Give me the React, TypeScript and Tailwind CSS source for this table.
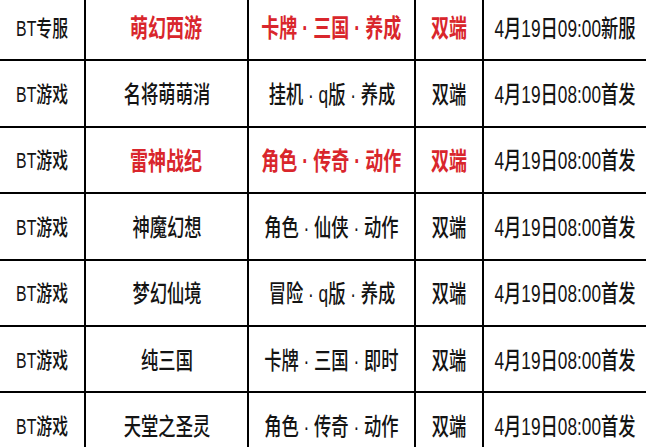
const games = [
  { tag: "BT专服", name: "萌幻西游", genre: "卡牌 · 三国 · 养成", platform: "双端", time: "4月19日09:00新服", hot: true },
  { tag: "BT游戏", name: "名将萌萌消", genre: "挂机 · q版 · 养成", platform: "双端", time: "4月19日08:00首发" },
  { tag: "BT游戏", name: "雷神战纪", genre: "角色 · 传奇 · 动作", platform: "双端", time: "4月19日08:00首发", hot: true },
  { tag: "BT游戏", name: "神魔幻想", genre: "角色 · 仙侠 · 动作", platform: "双端", time: "4月19日08:00首发" },
  { tag: "BT游戏", name: "梦幻仙境", genre: "冒险 · q版 · 养成", platform: "双端", time: "4月19日08:00首发" },
  { tag: "BT游戏", name: "纯三国", genre: "卡牌 · 三国 · 即时", platform: "双端", time: "4月19日08:00首发" },
  { tag: "BT游戏", name: "天堂之圣灵", genre: "角色 · 传奇 · 动作", platform: "双端", time: "4月19日08:00首发" },
];

function Cell({
  text,
  width,
  red,
  small,
  last,
}: {
  text: string;
  width: string;
  red?: boolean;
  small?: boolean;
  last?: boolean;
}) {
  const look = red
    ? "scale-x-[0.72] text-[25px] font-bold text-[#d9262c]"
    : small
      ? "scale-x-[0.72] text-[22px] text-[#141414]"
      : "scale-x-[0.72] text-[24px] text-[#141414]";
  return (
    <div
      className={`${width} flex h-full min-w-0 items-center justify-center border-b-2 border-black pt-[3px] ${last ? "" : "shrink-0 border-r-2"}`}
    >
      <span className={`inline-block shrink-0 whitespace-nowrap leading-none ${look}`}>{text}</span>
    </div>
  );
}

export default function App() {
  return (
    <div className="h-[447px] w-[646px] overflow-hidden bg-white font-['Liberation_Sans','Noto_Sans_CJK_SC',sans-serif] font-medium">
      <div className="-mt-[5px] flex flex-col">
        {games.map((g, i) => (
          <div key={i} className="flex h-[66.4px]">
            <Cell text={g.tag} width="w-[86px]" small />
            <Cell text={g.name} width="w-[163px]" red={g.hot} />
            <Cell text={g.genre} width="w-[167px]" red={g.hot} />
            <Cell text={g.platform} width="w-[68px]" red={g.hot} />
            <Cell text={g.time} width="flex-1" last />
          </div>
        ))}
      </div>
    </div>
  );
}
